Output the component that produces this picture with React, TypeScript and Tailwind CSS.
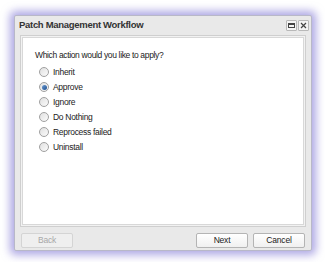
import React from "react";

const options = ["Inherit", "Approve", "Ignore", "Do Nothing", "Reprocess failed", "Uninstall"];

function Radio({ checked }: { checked?: boolean }) {
  return (
    <span className="relative flex h-[10px] w-[10px] items-center justify-center rounded-full border border-[#a0a0a0] bg-gradient-to-br from-[#e0e0e0] to-[#fbfbfb]">
      {checked && (
        <span className="h-[5px] w-[5px] rounded-full bg-gradient-to-br from-[#6a9ad0] to-[#1d4f8f]" />
      )}
    </span>
  );
}

function Btn({ label, disabled }: { label: string; disabled?: boolean }) {
  return (
    <button
      className={`flex h-[15px] w-[52px] items-center justify-center rounded-[2px] border text-[8.5px] leading-none tracking-[-0.2px] ${
        disabled
          ? "border-[#d4d4d4] bg-[#efefef] text-[#a8a8a8]"
          : "border-[#b4b4b4] bg-gradient-to-b from-[#ffffff] to-[#f0f0f0] text-[#222]"
      }`}
    >
      {label}
    </button>
  );
}

export default function App() {
  return (
    <div
      className="h-[262px] w-[325px] overflow-hidden bg-white pl-[14px] pt-[15px]"
      style={{ fontFamily: '"Liberation Sans", Arial, sans-serif' }}
    >
      <div className="flex h-[236px] w-[298px] flex-col rounded-[2px] border border-[#b8b8c8] bg-[#e9e9e9] shadow-[0_0_9px_4px_rgba(120,110,210,0.6)]">
        <div className="flex h-[18px] items-center justify-between pl-[4px] pr-[2px]">
          <span className="text-[9.5px] font-bold tracking-[-0.3px] text-[#333]">Patch Management Workflow</span>
          <div className="flex gap-[1px]">
            <span className="flex h-[11px] w-[11px] items-center justify-center rounded-[1px] border border-[#b8b8b8] bg-[#f4f4f4]">
              <span className="h-[5px] w-[7px] border border-t-2 border-[#444]" />
            </span>
            <span className="flex h-[11px] w-[11px] items-center justify-center rounded-[1px] border border-[#b8b8b8] bg-[#f4f4f4]">
              <svg width="7" height="7" viewBox="0 0 7 7">
                <path d="M1 1L6 6M6 1L1 6" stroke="#444" strokeWidth="1.2" />
              </svg>
            </span>
          </div>
        </div>
        <div className="mx-[5px] mt-[1px] h-[192px] border border-[#cfcfcf] bg-[#f2f2f2] p-[1px]">
          <div className="h-full border border-[#d8d8d8] bg-white pl-[12px] pt-[11px]">
            <div className="text-[8.5px] tracking-[-0.35px] text-[#222]">Which action would you like to apply?</div>
            <div className="mt-[3px] flex flex-col pl-[4px]">
              {options.map((o, i) => (
                <label key={o} className="flex h-[15px] items-center gap-[4px] text-[8.5px] tracking-[-0.3px] text-[#222]">
                  <Radio checked={i === 1} />
                  {o}
                </label>
              ))}
            </div>
          </div>
        </div>
        <div className="mt-[6px] flex items-center px-[6px]">
          <Btn label="Back" disabled />
          <div className="flex-1" />
          <div className="flex gap-[5px]">
            <Btn label="Next" />
            <Btn label="Cancel" />
          </div>
        </div>
      </div>
    </div>
  );
}
